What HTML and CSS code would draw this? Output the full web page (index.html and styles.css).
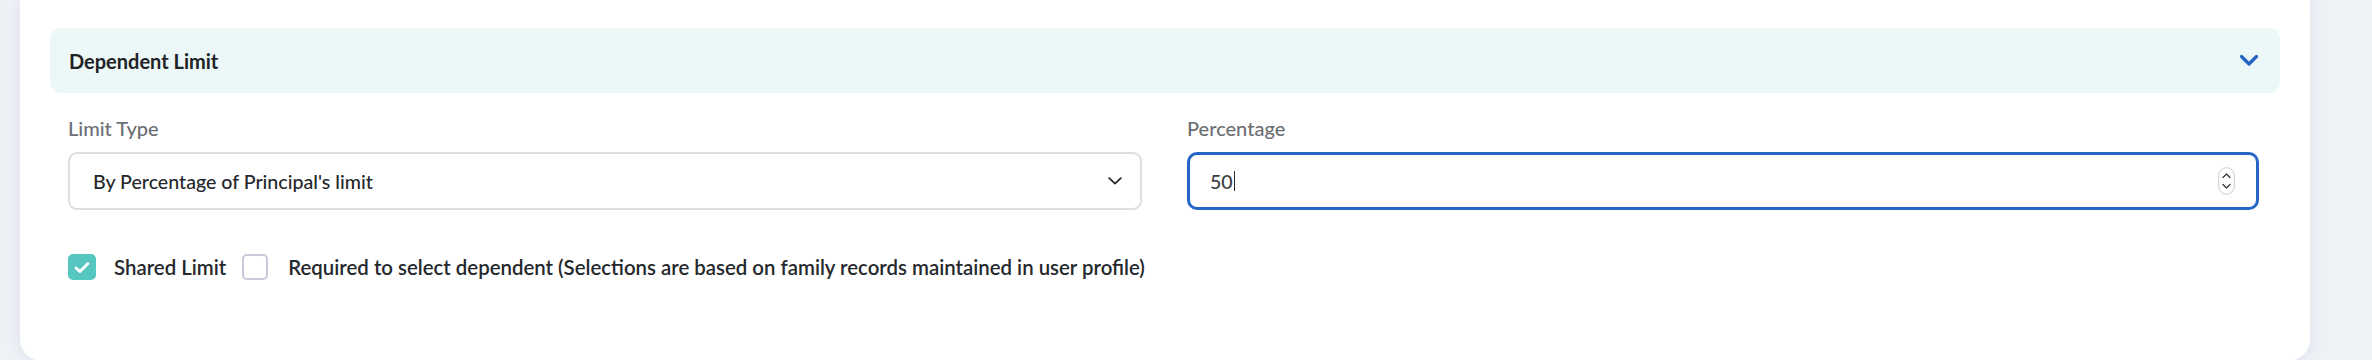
FILE: index.html
```html
<!DOCTYPE html>
<html lang="en">
<head>
  <meta charset="UTF-8" />
  <meta name="viewport" content="width=device-width, initial-scale=1.0"/>
  <title>Dependent Limit</title>
  <link rel="stylesheet" href="styles.css">
</head>
<body>

  <div class="card">
    <div class="section-header">
      <span class="section-title">Dependent Limit</span>
      <svg class="header-chevron" width="20" height="13" viewBox="0 0 20 13">
        <path d="M2.5 2.5 L10 10 L17.5 2.5" fill="none" stroke="#2263c5" stroke-width="3.2" stroke-linecap="round" stroke-linejoin="round"/>
      </svg>
    </div>

    <div class="form-grid">
      <div class="field">
        <label class="field-label">Limit Type</label>
        <div class="select-box">
          <span class="select-value">By Percentage of Principal's limit</span>
          <svg class="select-chevron" width="14" height="8" viewBox="0 0 14 8">
            <path d="M1.2 1.2 L7 6.6 L12.8 1.2" fill="none" stroke="#26282b" stroke-width="1.8" stroke-linecap="round" stroke-linejoin="round"/>
          </svg>
        </div>
      </div>

      <div class="field">
        <label class="field-label">Percentage</label>
        <div class="number-box">
          <span class="number-value">50</span>
          <span class="caret"></span>
          <span class="spacer"></span>
          <svg class="spinner" width="17" height="28" viewBox="0 0 17 28">
            <rect x="0.75" y="0.75" width="15.5" height="26.5" rx="7.75" fill="#fff" stroke="#c9cbce" stroke-width="1"/>
            <path d="M5 10.5 L8.5 7 L12 10.5" fill="none" stroke="#3a3c40" stroke-width="1.4" stroke-linecap="round" stroke-linejoin="round"/>
            <path d="M5 17.5 L8.5 21 L12 17.5" fill="none" stroke="#3a3c40" stroke-width="1.4" stroke-linecap="round" stroke-linejoin="round"/>
          </svg>
        </div>
      </div>
    </div>

    <div class="check-row">
      <span class="checkbox checked">
        <svg width="16" height="13" viewBox="0 0 16 13">
          <path d="M2 7 L6 10.6 L14 2.4" fill="none" stroke="#fff" stroke-width="2.8" stroke-linecap="round" stroke-linejoin="round"/>
        </svg>
      </span>
      <span class="check-label">Shared Limit</span>
      <span class="checkbox"></span>
      <span class="check-label wide">Required to select dependent (Selections are based on family records maintained in user profile)</span>
    </div>
  </div>

</body>
</html>
```

FILE: styles.css
```css
* {
  box-sizing: border-box;
}

body {
  font-family: Lato, 'Noto Sans', sans-serif;
  background-color: #eef1f6;
  margin: 0;
  padding: 0;
  height: 360px;
  overflow: hidden;
}

.card {
  margin: 0 62px 0 20px;
  height: 361px;
  padding: 28px 30px 0 30px;
  background-color: #ffffff;
  border-radius: 0 0 22px 22px;
  box-shadow: 0 0 14px rgba(150, 160, 185, 0.18);
}

.section-header {
  display: flex;
  align-items: center;
  justify-content: space-between;
  height: 65px;
  padding: 0 21px 0 19px;
  background-color: #ecf8f7;
  border-radius: 11px;
}

.section-title {
  font-size: 20px;
  font-weight: 700;
  color: #1f2226;
}

.header-chevron {
  display: block;
}

.form-grid {
  display: grid;
  grid-template-columns: 1074px 1072px;
  column-gap: 45px;
  padding: 0 0 0 18px;
  margin-top: 22px;
}

.field {
  display: flex;
  flex-direction: column;
}

.field-label {
  font-size: 20px;
  font-weight: 500;
  line-height: 26px;
  color: #6b6e73;
  margin-bottom: 11px;
}

.select-box {
  display: flex;
  align-items: center;
  justify-content: space-between;
  height: 58px;
  padding: 0 18px 0 23px;
  border: 2px solid #dcdee1;
  border-radius: 9px;
}

.select-value {
  font-size: 19.6px;
  font-weight: 500;
  color: #24272b;
}

.select-chevron {
  display: block;
}

.number-box {
  display: flex;
  align-items: center;
  height: 58px;
  padding: 0 21px 0 20px;
  border: 3px solid #2566c6;
  border-radius: 10px;
}

.number-value {
  font-size: 19.6px;
  font-weight: 500;
  color: #3b3e42;
}

.caret {
  width: 1.5px;
  height: 20px;
  margin-left: 1px;
  background-color: #2a2c30;
}

.spacer {
  flex: 1;
}

.spinner {
  display: block;
}

.check-row {
  display: flex;
  align-items: center;
  margin-top: 44px;
  padding-left: 18px;
}

.checkbox {
  display: flex;
  align-items: center;
  justify-content: center;
  flex-shrink: 0;
  width: 26px;
  height: 26px;
  border: 2px solid #c8cadb;
  border-radius: 5px;
  background-color: #ffffff;
}

.checkbox.checked {
  width: 28px;
  border-color: #56c6c1;
  background-color: #56c6c1;
}

.check-label {
  font-size: 20.4px;
  font-weight: 600;
  color: #25282c;
  margin-left: 18px;
  margin-right: 16px;
}

.check-label.wide {
  margin-left: 20px;
}
```
